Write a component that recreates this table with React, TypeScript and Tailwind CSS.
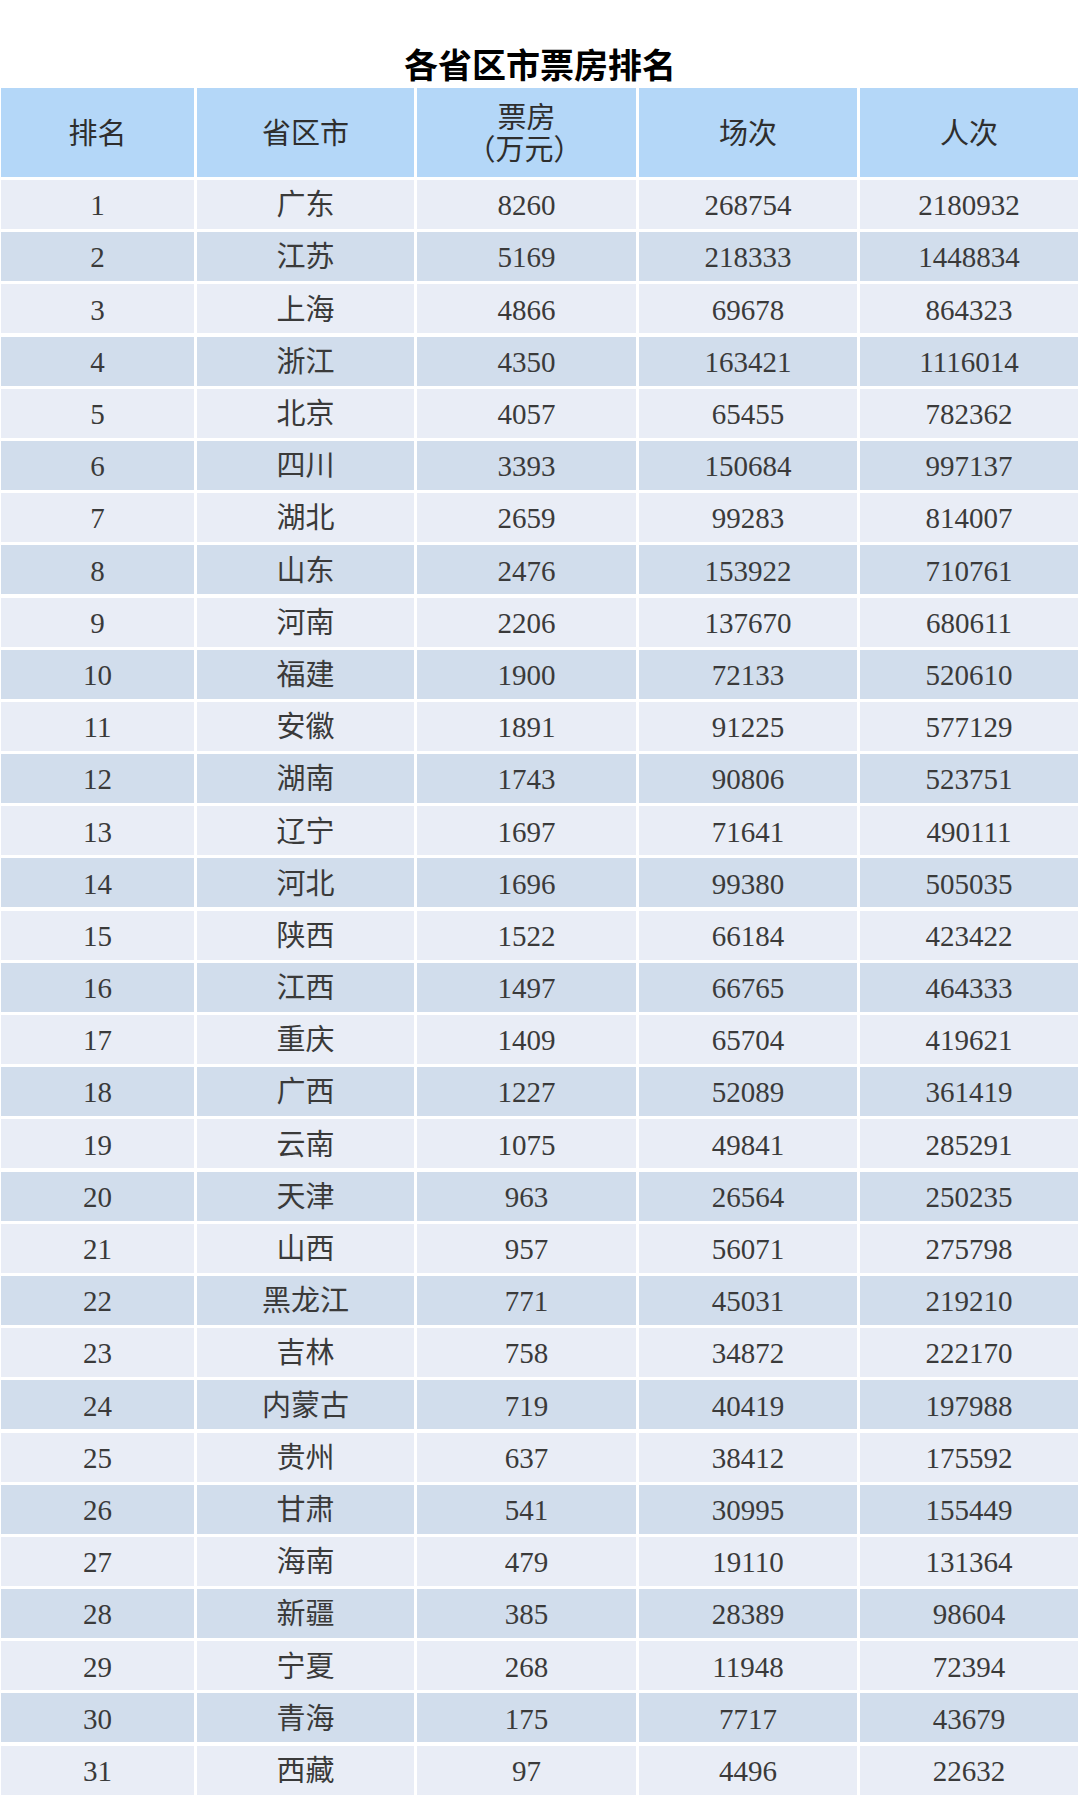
const rows: [number, string, number, number, number][] = [
  [1, '广东', 8260, 268754, 2180932],
  [2, '江苏', 5169, 218333, 1448834],
  [3, '上海', 4866, 69678, 864323],
  [4, '浙江', 4350, 163421, 1116014],
  [5, '北京', 4057, 65455, 782362],
  [6, '四川', 3393, 150684, 997137],
  [7, '湖北', 2659, 99283, 814007],
  [8, '山东', 2476, 153922, 710761],
  [9, '河南', 2206, 137670, 680611],
  [10, '福建', 1900, 72133, 520610],
  [11, '安徽', 1891, 91225, 577129],
  [12, '湖南', 1743, 90806, 523751],
  [13, '辽宁', 1697, 71641, 490111],
  [14, '河北', 1696, 99380, 505035],
  [15, '陕西', 1522, 66184, 423422],
  [16, '江西', 1497, 66765, 464333],
  [17, '重庆', 1409, 65704, 419621],
  [18, '广西', 1227, 52089, 361419],
  [19, '云南', 1075, 49841, 285291],
  [20, '天津', 963, 26564, 250235],
  [21, '山西', 957, 56071, 275798],
  [22, '黑龙江', 771, 45031, 219210],
  [23, '吉林', 758, 34872, 222170],
  [24, '内蒙古', 719, 40419, 197988],
  [25, '贵州', 637, 38412, 175592],
  [26, '甘肃', 541, 30995, 155449],
  [27, '海南', 479, 19110, 131364],
  [28, '新疆', 385, 28389, 98604],
  [29, '宁夏', 268, 11948, 72394],
  [30, '青海', 175, 7717, 43679],
  [31, '西藏', 97, 4496, 22632],
];

const cellFont = "font-['Liberation_Serif','Noto_Sans_CJK_SC',serif]";

export default function App() {
  return (
    <div className="h-[1800px] w-[1080px] bg-white">
      <h1 className="h-[88px] pt-[42px] text-center font-['Noto_Sans_CJK_SC',sans-serif] text-[34px] font-bold leading-[44px] text-black">
        各省区市票房排名
      </h1>

      {/* Table header */}
      <div className={`ml-[1px] grid w-[1077px] grid-cols-[193px_217px_219px_218px_218px] gap-x-[3px] text-[29px] text-[#2e2e2e] ${cellFont}`}>
        <div className="flex h-[89px] items-center justify-center bg-[#b4d7f8] pt-[5px]">排名</div>
        <div className="flex h-[89px] items-center justify-center bg-[#b4d7f8] pt-[5px]">省区市</div>
        <div className="flex h-[89px] flex-col items-center justify-center bg-[#b4d7f8] pt-[3px] leading-[32px]">
          <span>票房</span>
          <span className="-ml-[4px]">（万元）</span>
        </div>
        <div className="flex h-[89px] items-center justify-center bg-[#b4d7f8] pt-[5px]">场次</div>
        <div className="flex h-[89px] items-center justify-center bg-[#b4d7f8] pt-[5px]">人次</div>
      </div>

      {/* Table body */}
      <div className={`ml-[1px] mt-[3px] grid w-[1077px] grid-cols-[193px_217px_219px_218px_218px] gap-x-[3px] gap-y-[3.2px] text-[29px] text-[#3a3a3a] ${cellFont}`}>
        {rows.map(([rank, name, box, shows, people]) => {
          const bg = rank % 2 === 1 ? 'bg-[#e9edf6]' : 'bg-[#d1ddec]';
          return [rank, name, box, shows, people].map((v, i) => (
            <div key={`${rank}-${i}`} className={`flex h-[49px] items-center justify-center pt-[3px] ${bg}`}>
              {v}
            </div>
          ));
        })}
      </div>
    </div>
  );
}
